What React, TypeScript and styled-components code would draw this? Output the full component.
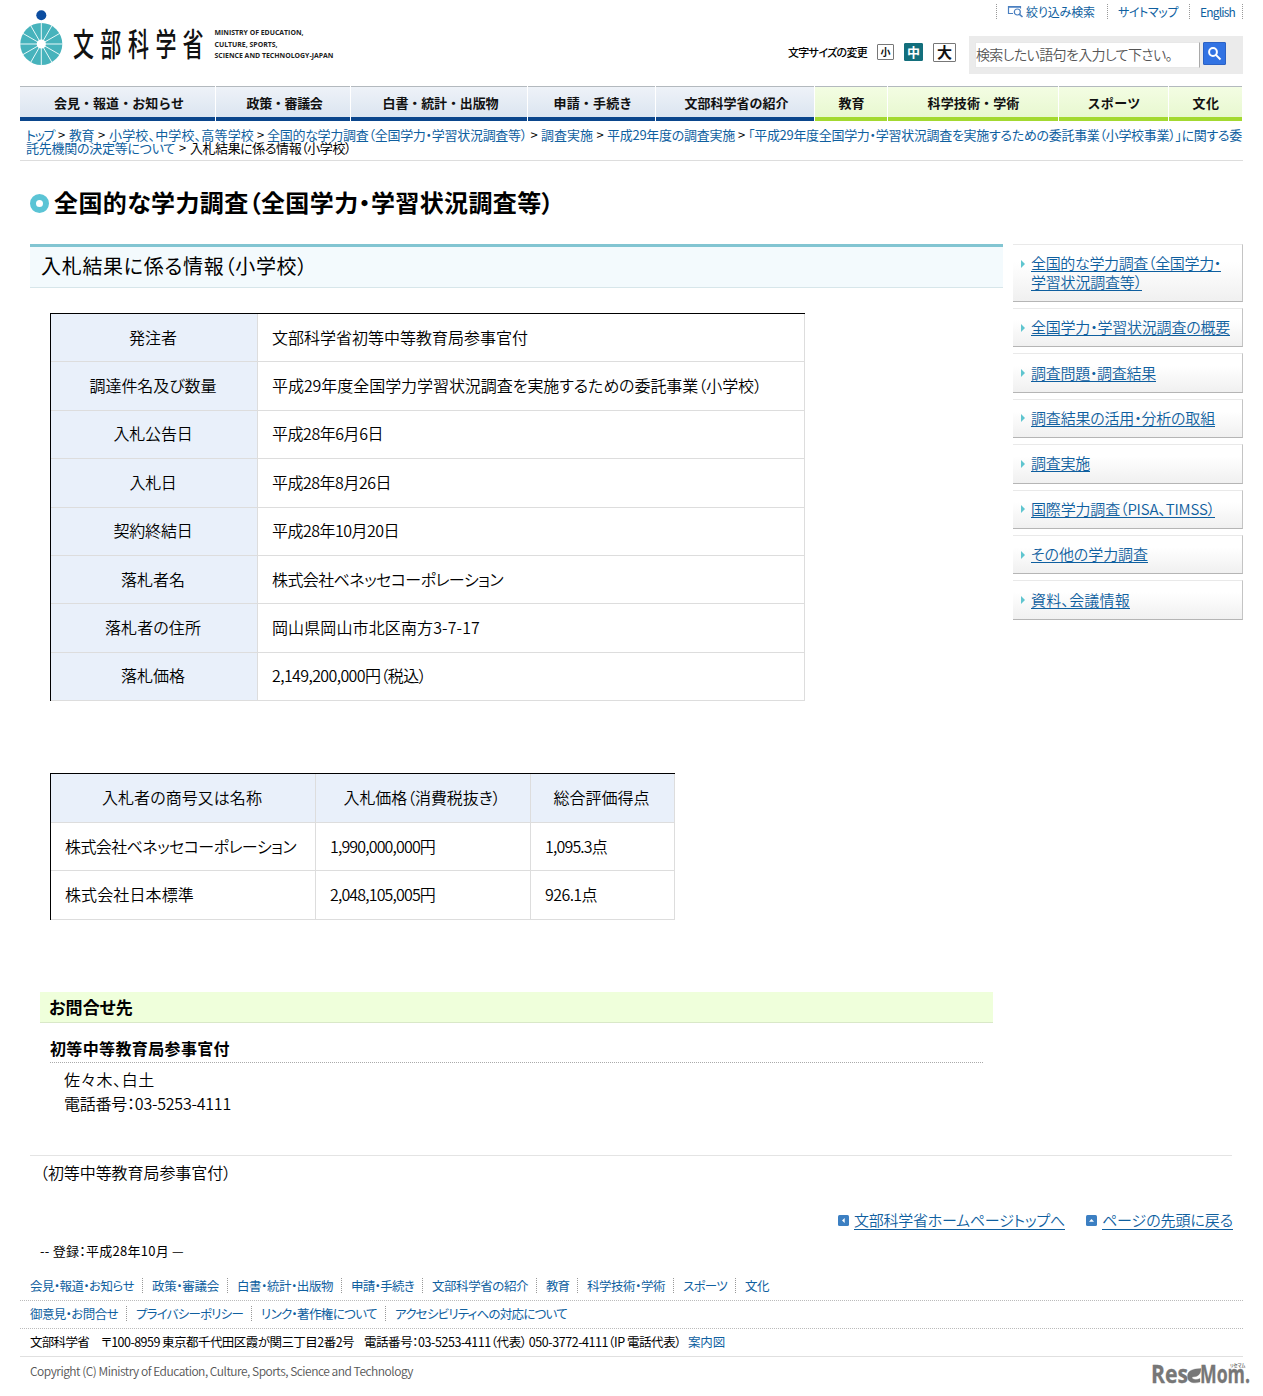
import React, { useLayoutEffect, useRef, useState } from "react";
import styled, { createGlobalStyle, css } from "styled-components";

const link = "#0f5f9f";

const Global = createGlobalStyle`
  * { box-sizing: border-box; }
  body {
    margin: 0;
    background: #fff;
    color: #000;
    font-family: "Noto Sans CJK JP", "Liberation Sans", sans-serif;
    font-weight: 350;
    font-feature-settings: "palt";
  }
  a { color: ${link}; text-decoration: none; }
  h1, h2, h3, h4, p, ul { margin: 0; padding: 0; font-weight: inherit; }
  ul { list-style: none; }
`;

/* Text tracked so that it fills a given measure. */
const Measure = styled.span<{ $w: number; $size?: number; $bold?: boolean }>`
  display: inline-block;
  flex: none;
  width: ${(p) => p.$w}px;
  white-space: pre;
  ${(p) => p.$size && css`font-size: ${p.$size}px;`}
  ${(p) => p.$bold && css`font-weight: 700;`}
`;

function Fit({ w, size, bold, children }: { w: number; size?: number; bold?: boolean; children: string }) {
  const ref = useRef<HTMLSpanElement>(null);
  const [spacing, setSpacing] = useState(0);
  useLayoutEffect(() => {
    const natural = ref.current!.getBoundingClientRect().width;
    setSpacing((w - natural) / Array.from(children).length);
  }, [w, children]);
  return (
    <Measure $w={w} $size={size} $bold={bold}>
      <span ref={ref} style={{ letterSpacing: spacing }}>{children}</span>
    </Measure>
  );
}

const Page = styled.div`
  width: 1263px;
  height: 1396px;
  overflow: hidden;
  display: flex;
  flex-direction: column;
`;

/* ---------- header ---------- */
const Header = styled.header`
  height: 86px;
  padding: 0 20px;
  display: flex;
  justify-content: space-between;
`;
const Logo = styled.svg`
  display: block;
  width: 330px;
  height: 70px;
`;
const HeaderSide = styled.div`
  display: flex;
  flex-direction: column;
  align-items: flex-end;
`;
const TopLinks = styled.ul`
  display: flex;
  height: 24px;
  padding-top: 4px;
  margin-bottom: 12px;
  font-size: 12px;
  font-weight: 400;
`;
const TopLink = styled.li<{ $w: number; $last?: boolean }>`
  display: flex;
  align-items: center;
  gap: 2px;
  width: ${(p) => p.$w}px;
  height: 15px;
  padding-left: 10px;
  border-left: 1px dotted #999;
  ${(p) => p.$last && css`border-right: 1px dotted #999;`}
`;
const Tools = styled.div`
  display: flex;
`;
const SizeTools = styled.div`
  display: flex;
  align-items: center;
  height: 32px;
  margin-right: 13px;
  font-weight: 500;
`;
const SizeButton = styled.button<{ $w: number; $h: number; $fs: number; $on?: boolean; $ml: number }>`
  width: ${(p) => p.$w}px;
  height: ${(p) => p.$h}px;
  margin: 0 0 0 ${(p) => p.$ml}px;
  padding: 0 0 1px;
  display: flex;
  align-items: center;
  justify-content: center;
  border: 1px solid ${(p) => (p.$on ? "#136f7c" : "#777")};
  border-radius: 1px;
  background: ${(p) => (p.$on ? "#136f7c" : "#fff")};
  color: ${(p) => (p.$on ? "#fff" : "#111")};
  font: 700 ${(p) => p.$fs}px/1 "Noto Sans CJK JP", sans-serif;
`;
const SearchBox = styled.form`
  width: 274px;
  height: 38px;
  padding: 6px 0 0 6px;
  display: flex;
  gap: 3px;
  background: #ebebeb;
`;
const SearchInput = styled.div`
  width: 225px;
  height: 26px;
  padding: 0 0 2px;
  display: flex;
  align-items: center;
  border: 1px solid #e8e8e8;
  border-right-color: #a9a9a9;
  background: #fff;
  color: #555;
`;
const SearchButton = styled.button`
  width: 23px;
  height: 23px;
  padding: 0;
  border: 1px solid #2c62c4;
  border-radius: 1px;
  background: #3273e3;
  display: grid;
  place-items: center;
`;

/* ---------- navigation ---------- */
const Nav = styled.nav`
  display: flex;
  gap: 1px;
  margin-left: 20px;
  height: 35px;
`;
const NavItem = styled.a<{ $w: number; $green?: boolean }>`
  width: ${(p) => p.$w}px;
  height: 35px;
  display: flex;
  align-items: center;
  justify-content: center;
  padding-left: ${(p) => (p.$green ? 1 : 3)}px;
  border-top: 1px solid #b3b9be;
  border-bottom: 4px solid ${(p) => (p.$green ? "#a3d930" : "#0b468c")};
  background: linear-gradient(${(p) => (p.$green ? "#f3fde3, #e8f8d0" : "#eef2f8, #dbe5f0")});
  color: #111;
  font-feature-settings: normal;
`;

const Crumbs = styled.nav`
  height: 40px;
  margin: 0 20px;
  padding: 7px 0 0 6px;
  border-bottom: 1px solid #ddd;
  font-size: 13px;
  font-weight: 400;
`;
const CrumbLine = styled.div`
  display: flex;
  height: 13px;
  line-height: 13px;
`;
const Arrow = styled.span<{ $w: number }>`
  width: ${(p) => p.$w}px;
  flex: none;
  display: grid;
  place-items: center;
`;

/* ---------- headings ---------- */
const SiteTitle = styled.h1`
  height: 83px;
  padding: 0 0 0 30px;
  display: flex;
  align-items: center;
  gap: 5px;
`;
const TitleText = styled.span`
  display: flex;
  padding-bottom: 2px;
`;
const Ring = styled.span`
  width: 19px;
  height: 19px;
  margin-top: 1px;
  border: 6px solid #5bc4d5;
  border-radius: 50%;
`;
const Columns = styled.div`
  display: flex;
  align-items: flex-start;
  gap: 10px;
  padding-left: 30px;
  height: 911px;
`;
const Main = styled.main`
  width: 973px;
`;
const PageTitle = styled.h2`
  height: 44px;
  padding: 0 0 3px 11px;
  display: flex;
  align-items: center;
  border-top: 3px solid #82c5d2;
  border-bottom: 1px solid #d7e6ea;
  background: #f3fafd;
  font-weight: 400;
`;

/* ---------- tables ---------- */
const Table = styled.div<{ $top: number; $cols: string; $rows: number; $head: number }>`
  display: grid;
  grid-template-columns: ${(p) => p.$cols};
  grid-template-rows: ${(p) => p.$head}px repeat(${(p) => p.$rows}, 1fr);
  width: max-content;
  height: ${(p) => p.$head + p.$rows * 48.375 + 1}px;
  margin: ${(p) => p.$top}px 0 0 20px;
  border-top: 1px solid #000;
  border-left: 1px solid #000;
  font-size: 16px;
`;
const Cell = styled.div<{ $head?: boolean }>`
  display: flex;
  align-items: center;
  justify-content: ${(p) => (p.$head ? "center" : "flex-start")};
  padding: ${(p) => (p.$head ? "0 2px 2px 0" : "0 0 2px 14px")};
  border-right: 1px solid #ddd;
  border-bottom: 1px solid #ddd;
  background: ${(p) => (p.$head ? "#e9f0fa" : "#fff")};
`;

/* ---------- contact ---------- */
const ContactTitle = styled.h3`
  width: 953px;
  height: 31px;
  margin: 72px 0 0 10px;
  padding-left: 9px;
  display: flex;
  align-items: center;
  background: #efffdb;
  border-bottom: 1px solid #d9e8c8;
`;
const ContactDept = styled.h4`
  width: 933px;
  height: 40px;
  margin-left: 20px;
  padding-top: 11px;
  display: flex;
  align-items: center;
  border-bottom: 1px dotted #aaa;
`;
const ContactBody = styled.div`
  padding: 4px 0 0 34px;
  display: flex;
  flex-direction: column;
  line-height: 24px;
`;

/* ---------- side menu ---------- */
const Side = styled.ul`
  width: 230px;
  display: flex;
  flex-direction: column;
  gap: 6px;
`;
const SideItem = styled.li<{ $h: number }>`
  height: ${(p) => p.$h}px;
  display: flex;
  align-items: center;
  gap: 6px;
  padding: 0 0 2px 7px;
  border: 1px solid #e9e9e9;
  border-left: 0;
  border-right-color: #c4c4c4;
  border-bottom-color: #b5b5b5;
  background: linear-gradient(#fff 30%, #f0f0f0);
`;
const Triangle = styled.i<{ $two?: boolean }>`
  margin-left: 1px;
  margin-top: ${(p) => (p.$two ? -17 : 2)}px;
  border: 4px solid transparent;
  border-left-color: #5fc5cf;
  border-right: 0;
`;
const SideLink = styled.a`
  display: flex;
  flex-direction: column;
  line-height: 19px;
  text-decoration: underline;
  text-decoration-thickness: 1px;
  text-underline-offset: 2px;
`;

/* ---------- footer ---------- */
const Credit = styled.div`
  width: 1202px;
  height: 48px;
  margin-left: 30px;
  padding: 4px 0 0 10px;
  border-top: 1px solid #e4e4e4;
`;
const PageLinks = styled.div`
  display: flex;
  align-items: center;
  justify-content: flex-end;
  height: 34px;
  padding: 0 30px 2px 0;
`;
const PageLink = styled.a`
  display: flex;
  align-items: center;
  gap: 5px;
  margin-left: 21px;
  text-decoration: underline;
  text-decoration-thickness: 1px;
  text-underline-offset: 3px;
  & svg { margin-top: 2px; }
`;
const Registered = styled.p`
  height: 36px;
  padding: 4px 0 0 40px;
  display: flex;
  font-size: 13px;
  font-weight: 400;
  line-height: 20px;
`;
const FootRow = styled.div<{ $h: number; $line: string; $size?: number }>`
  height: ${(p) => p.$h}px;
  margin: 0 20px;
  padding: 0 0 2px 10px;
  display: flex;
  align-items: center;
  border-bottom: 1px ${(p) => p.$line};
  font-size: 12.5px;
  font-weight: 400;
`;
const FootItem = styled.span`
  height: 15px;
  line-height: 15px;
  display: flex;
  padding-right: 8px;
  & + & {
    padding-left: 9px;
    border-left: 1px dotted #999;
  }
`;
const Gap = styled.span<{ $w: number }>`
  width: ${(p) => p.$w}px;
`;
const Bottom = styled.div`
  display: flex;
  justify-content: space-between;
  padding: 5px 12px 0 30px;
  height: 39px;
  color: #555;
  font-size: 12px;
`;
const ReseMom = styled.svg`
  display: block;
  width: 100px;
  height: 36px;
  margin-top: -8px;
`;

const nav: [string, number, number, boolean?][] = [
  ["会見・報道・お知らせ", 195, 130],
  ["政策・審議会", 134, 76],
  ["白書・統計・出版物", 176, 116],
  ["申請・手続き", 127, 79],
  ["文部科学省の紹介", 158, 104],
  ["教育", 72, 26, true],
  ["科学技術・学術", 170, 92, true],
  ["スポーツ", 109, 53, true],
  ["文化", 73, 27, true],
];

const crumbs: [string, number, number][] = [
  ["トップ", 28, 15],
  ["教育", 25, 15],
  ["小学校、中学校、高等学校", 145, 13],
  ["全国的な学力調査（全国学力・学習状況調査等）", 260, 14],
  ["調査実施", 52, 14],
  ["平成29年度の調査実施", 128, 13],
  ["「平成29年度全国学力・学習状況調査を実施するための委託事業（小学校事業）」に関する委", 494, 0],
];

const award: [string, number, string, number][] = [
  ["発注者", 48, "文部科学省初等中等教育局参事官付", 256],
  ["調達件名及び数量", 127, "平成29年度全国学力学習状況調査を実施するための委託事業（小学校）", 490],
  ["入札公告日", 79, "平成28年6月6日", 111],
  ["入札日", 47, "平成28年8月26日", 119],
  ["契約終結日", 79, "平成28年10月20日", 127],
  ["落札者名", 64, "株式会社ベネッセコーポレーション", 231],
  ["落札者の住所", 96, "岡山県岡山市北区南方3-7-17", 208],
  ["落札価格", 64, "2,149,200,000円（税込）", 154],
];

const bids: [string, number, string, number, string, number][] = [
  ["株式会社ベネッセコーポレーション", 231, "1,990,000,000円", 105, "1,095.3点", 62],
  ["株式会社日本標準", 129, "2,048,105,005円", 105, "926.1点", 52],
];

const side: [string, number][][] = [
  [["全国的な学力調査（全国学力・", 190], ["学習状況調査等）", 111]],
  [["全国学力・学習状況調査の概要", 199]],
  [["調査問題・調査結果", 125]],
  [["調査結果の活用・分析の取組", 184]],
  [["調査実施", 59]],
  [["国際学力調査（PISA、TIMSS）", 184]],
  [["その他の学力調査", 117]],
  [["資料、会議情報", 99]],
];

const foot1: [string, number][] = [
  ["会見・報道・お知らせ", 104], ["政策・審議会", 67], ["白書・統計・出版物", 96],
  ["申請・手続き", 63], ["文部科学省の紹介", 96], ["教育", 23],
  ["科学技術・学術", 78], ["スポーツ", 44], ["文化", 24],
];
const foot2: [string, number][] = [
  ["御意見・お問合せ", 88], ["プライバシーポリシー", 107],
  ["リンク・著作権について", 116], ["アクセシビリティへの対応について", 172],
];

const spokes = Array.from({ length: 12 }, (_, i) => (i * Math.PI) / 6);

function MextLogo() {
  return (
    <Logo viewBox="20 0 330 70">
      <circle cx="41.3" cy="15.3" r="5" fill="#0c4da0" />
      <circle cx="41.3" cy="44" r="21" fill="#47b3bc" />
      {spokes.map((a) => (
        <line key={a} x1="41.3" y1="44" x2={41.3 + 21.5 * Math.sin(a)} y2={44 - 21.5 * Math.cos(a)} stroke="#e9f8f9" strokeWidth="1" />
      ))}
      <circle cx="41.3" cy="44" r="4.6" fill="#fff" />
      <g fontFamily="'Noto Sans CJK JP', sans-serif" fontWeight="500" fill="#111">
        <text transform="translate(73 55.7) scale(1 1.5)" fontSize="21" x="0 27.3 55 82.5 109.500">文部科学省</text>
      </g>
      <g fontFamily="'Open Sans', sans-serif" fontWeight="700" fontSize="7.6" fill="#222">
        <text x="214.5" y="35" textLength="89" lengthAdjust="spacingAndGlyphs">MINISTRY OF EDUCATION,</text>
        <text x="214.5" y="46.6" textLength="63" lengthAdjust="spacingAndGlyphs">CULTURE, SPORTS,</text>
        <text x="214.5" y="58.2" textLength="119" lengthAdjust="spacingAndGlyphs">SCIENCE AND TECHNOLOGY-JAPAN</text>
      </g>
    </Logo>
  );
}

function LinkIcon({ up }: { up?: boolean }) {
  return (
    <svg width="11" height="11" viewBox="0 0 11 11">
      <rect width="11" height="11" rx="1.5" fill="#3c7fc2" />
      <path d={up ? "M3 6.7 5.5 4 8 6.7Z" : "M6.7 3 4 5.5 6.7 8Z"} fill="#fff" />
    </svg>
  );
}

export default function App() {
  return (
    <Page>
      <Global />
      <Header>
        <MextLogo />
        <HeaderSide>
          <TopLinks>
            <TopLink $w={111}>
              <svg width="17" height="13" viewBox="0 0 17 13" fill="none" stroke="#4a7fc0">
                <path d="M6 8.500H1.500V1.500H13.500V3.500M1.500 2.200H13.500" strokeWidth="1.2" />
                <circle cx="10.300" cy="7" r="3" strokeWidth="1.2" />
                <path d="m12.500 9.300 3 2.700" strokeWidth="1.6" />
              </svg>
              <a><Fit w={69}>絞り込み検索</Fit></a>
            </TopLink>
            <TopLink $w={82}><a><Fit w={60}>サイトマップ</Fit></a></TopLink>
            <TopLink $w={54} $last><a><Fit w={35}>English</Fit></a></TopLink>
          </TopLinks>
          <Tools>
            <SizeTools>
              <Fit w={79} size={11}>文字サイズの変更</Fit>
              <SizeButton $w={17} $h={16} $fs={10} $ml={10}>小</SizeButton>
              <SizeButton $w={19} $h={18} $fs={13} $ml={10} $on>中</SizeButton>
              <SizeButton $w={23} $h={19} $fs={15} $ml={10}>大</SizeButton>
            </SizeTools>
            <SearchBox>
              <SearchInput><Fit w={196} size={14}>検索したい語句を入力して下さい。</Fit></SearchInput>
              <SearchButton type="button">
                <svg width="15" height="15" viewBox="0 0 15 15" fill="none" stroke="#fff" strokeWidth="2">
                  <circle cx="6" cy="6" r="3.9" />
                  <path d="m8.9 8.9 4.6 4.6" />
                </svg>
              </SearchButton>
            </SearchBox>
          </Tools>
        </HeaderSide>
      </Header>

      <Nav>
        {nav.map(([t, w, tw, g]) => (
          <NavItem key={t} $w={w} $green={g}><Fit w={tw} size={13} bold>{t}</Fit></NavItem>
        ))}
      </Nav>

      <Crumbs>
        <CrumbLine>
          {crumbs.map(([t, w, gap]) => (
            <React.Fragment key={t}>
              <a><Fit w={w}>{t}</Fit></a>
              {gap > 0 && <Arrow $w={gap}>&gt;</Arrow>}
            </React.Fragment>
          ))}
        </CrumbLine>
        <CrumbLine>
          <a><Fit w={149}>託先機関の決定等について</Fit></a>
          <Arrow $w={15}>&gt;</Arrow>
          <Fit w={161}>入札結果に係る情報（小学校）</Fit>
        </CrumbLine>
      </Crumbs>

      <SiteTitle>
        <Ring />
        <TitleText><Fit w={500} size={24} bold>全国的な学力調査（全国学力・学習状況調査等）</Fit></TitleText>
      </SiteTitle>

      <Columns>
        <Main>
          <PageTitle><Fit w={267} size={20}>入札結果に係る情報（小学校）</Fit></PageTitle>

          <Table $top={25} $cols="207px 547px" $head={48.375} $rows={7}>
            {award.map(([k, kw, v, vw]) => (
              <React.Fragment key={k}>
                <Cell $head><Fit w={kw}>{k}</Fit></Cell>
                <Cell><Fit w={vw}>{v}</Fit></Cell>
              </React.Fragment>
            ))}
          </Table>

          <Table $top={72} $cols="265px 215px 144px" $head={49} $rows={2}>
            <Cell $head><Fit w={160}>入札者の商号又は名称</Fit></Cell>
            <Cell $head><Fit w={157}>入札価格（消費税抜き）</Fit></Cell>
            <Cell $head><Fit w={96}>総合評価得点</Fit></Cell>
            {bids.map(([a, aw, b, bw, c, cw]) => (
              <React.Fragment key={a}>
                <Cell><Fit w={aw}>{a}</Fit></Cell>
                <Cell><Fit w={bw}>{b}</Fit></Cell>
                <Cell><Fit w={cw}>{c}</Fit></Cell>
              </React.Fragment>
            ))}
          </Table>

          <ContactTitle><Fit w={84} size={17} bold>お問合せ先</Fit></ContactTitle>
          <ContactDept><Fit w={180} size={16} bold>初等中等教育局参事官付</Fit></ContactDept>
          <ContactBody>
            <Fit w={91} size={16}>佐々木、白土</Fit>
            <Fit w={167} size={16}>電話番号：03-5253-4111</Fit>
          </ContactBody>
        </Main>

        <Side>
          {side.map((lines, i) => (
            <SideItem key={i} $h={lines.length > 1 ? 58 : 39.4}>
              <Triangle $two={lines.length > 1} />
              <SideLink>
                {lines.map(([t, w]) => <Fit key={t} w={w} size={15}>{t}</Fit>)}
              </SideLink>
            </SideItem>
          ))}
        </Side>
      </Columns>

      <Credit><Fit w={191} size={16}>（初等中等教育局参事官付）</Fit></Credit>
      <PageLinks>
        <PageLink><LinkIcon /><Fit w={211} size={15}>文部科学省ホームページトップへ</Fit></PageLink>
        <PageLink><LinkIcon up /><Fit w={131} size={15}>ページの先頭に戻る</Fit></PageLink>
      </PageLinks>
      <Registered><Fit w={144}>-- 登録：平成28年10月 —</Fit></Registered>

      <FootRow $h={28} $line="dotted #bbb">
        {foot1.map(([t, w]) => <FootItem key={t}><a><Fit w={w}>{t}</Fit></a></FootItem>)}
      </FootRow>
      <FootRow $h={28} $line="dotted #bbb">
        {foot2.map(([t, w]) => <FootItem key={t}><a><Fit w={w}>{t}</Fit></a></FootItem>)}
      </FootRow>
      <FootRow $h={28} $line="solid #e0e0e0">
        <Fit w={59}>文部科学省</Fit>
        <Gap $w={12} />
        <Fit w={253}>〒100-8959 東京都千代田区霞が関三丁目2番2号</Fit>
        <Gap $w={10} />
        <Fit w={317}>電話番号：03-5253-4111（代表） 050-3772-4111（IP 電話代表）</Fit>
        <Gap $w={7} />
        <a><Fit w={37}>案内図</Fit></a>
      </FootRow>
      <Bottom>
        <Fit w={383}>Copyright (C) Ministry of Education, Culture, Sports, Science and Technology</Fit>
        <ReseMom viewBox="0 -8 100 36">
          <g fill="#777" stroke="#777" strokeWidth="0.3" fontFamily="'Open Sans', sans-serif" fontWeight="700" fontSize="24.500">
            <text x="0" y="20.700" textLength="37" lengthAdjust="spacingAndGlyphs">Res</text>
            <path d="M36.500 14.500C36.500 8.500 41 7 50 6.500C50 11.500 47.500 15 41 15C41.500 18 45.500 18 49 16.500V20C42.500 22 36.500 20.500 36.500 14.500Z" />
            <text x="49" y="20.700" textLength="50" lengthAdjust="spacingAndGlyphs">Mom.</text>
            <text x="79" y="4.500" stroke="none" fontFamily="'Noto Sans CJK JP', sans-serif" fontSize="4.200">リセマム</text>
          </g>
        </ReseMom>
      </Bottom>
    </Page>
  );
}
